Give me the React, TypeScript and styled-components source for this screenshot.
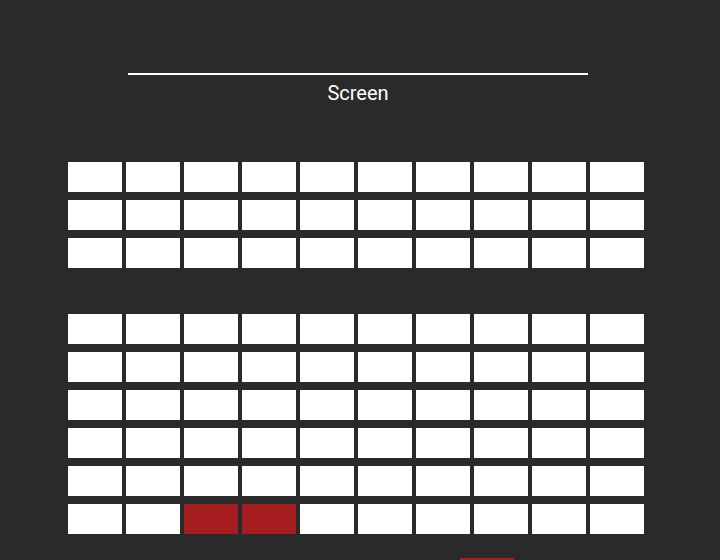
import React from 'react';
import styled, { createGlobalStyle } from 'styled-components';

const GlobalStyle = createGlobalStyle`
  html, body {
    margin: 0;
    padding: 0;
    background-color: #2a2a2a;
    overflow: hidden;
    font-family: Roboto, "Liberation Sans", sans-serif;
  }
`;

const Page = styled.div`
  width: 720px;
  height: 560px;
  display: flex;
  flex-direction: column;
  padding-top: 73px;
  box-sizing: border-box;
`;

const ScreenArea = styled.div`
  display: flex;
  flex-direction: column;
  align-items: center;
  width: 460px;
  margin-left: 128px;
`;

const ScreenLine = styled.div`
  width: 100%;
  height: 2px;
  background-color: #ffffff;
`;

const ScreenLabel = styled.span`
  margin-top: 7px;
  font-size: 20px;
  line-height: 23px;
  color: #ffffff;
`;

const SeatGrid = styled.div`
  display: grid;
  grid-template-columns: repeat(10, 54px);
  grid-auto-rows: 30px;
  column-gap: 4px;
  row-gap: 8px;
  margin-top: 57px;
  margin-left: 68px;
`;

const Aisle = styled.div`
  grid-column: 1 / -1;
`;

const Seat = styled.button<{ $taken?: boolean }>`
  border: none;
  padding: 0;
  margin: 0;
  cursor: pointer;
  background-color: ${({ $taken }) => ($taken ? '#a51d1f' : '#ffffff')};
`;

const Footer = styled.div`
  display: flex;
  margin-top: 24px;
  padding-left: 460px;
`;

const BookButton = styled.button`
  width: 54px;
  height: 30px;
  border: none;
  padding: 0;
  background-color: #a51d1f;
`;

const FRONT_ROWS = 3;
const BACK_ROWS = 6;
const COLS = 10;
const taken = new Set(['8-2', '8-3']);

const App: React.FC = () => {
  const renderRow = (row: number) =>
    Array.from({ length: COLS }, (_, col) => (
      <Seat key={`${row}-${col}`} $taken={taken.has(`${row}-${col}`)} />
    ));

  return (
    <>
      <GlobalStyle />
      <Page>
        <ScreenArea>
          <ScreenLine />
          <ScreenLabel>Screen</ScreenLabel>
        </ScreenArea>
        <SeatGrid>
          {Array.from({ length: FRONT_ROWS }, (_, r) => renderRow(r))}
          <Aisle />
          {Array.from({ length: BACK_ROWS }, (_, r) => renderRow(r + FRONT_ROWS))}
        </SeatGrid>
        <Footer>
          <BookButton />
        </Footer>
      </Page>
    </>
  );
};

export default App;
